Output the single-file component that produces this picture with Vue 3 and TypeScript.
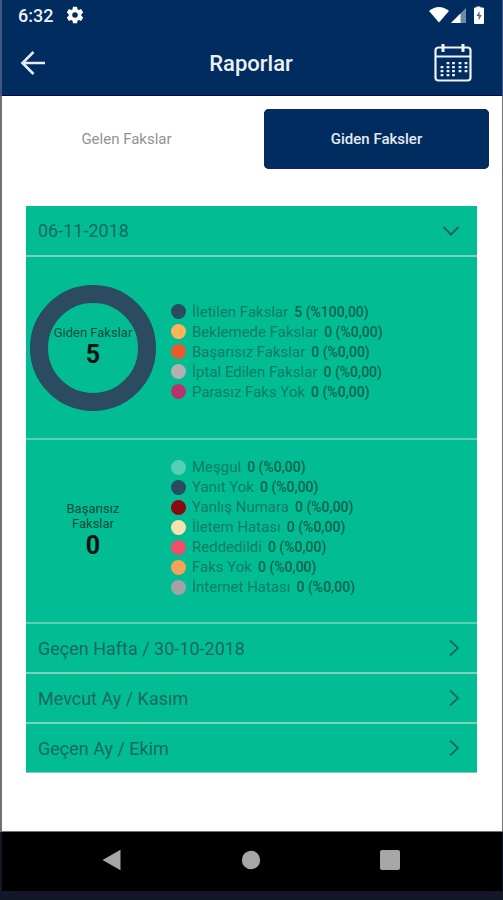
<script setup lang="ts">
import { ref } from 'vue'

interface LegendItem {
  label: string
  value: string
  color: string
}

const tabs = ['Gelen Fakslar', 'Giden Faksler']
const activeTab = ref(1)
const expanded = ref(true)

const outgoing: LegendItem[] = [
  { label: 'İletilen Fakslar', value: '5 (%100,00)', color: '#2a4b60' },
  { label: 'Beklemede Fakslar', value: '0 (%0,00)', color: '#fbb558' },
  { label: 'Başarısız Fakslar', value: '0 (%0,00)', color: '#eb5a2b' },
  { label: 'İptal Edilen Fakslar', value: '0 (%0,00)', color: '#b2b0b1' },
  { label: 'Parasız Faks Yok', value: '0 (%0,00)', color: '#b4356c' },
]

const failed: LegendItem[] = [
  { label: 'Meşgul', value: '0 (%0,00)', color: '#55cfb5' },
  { label: 'Yanıt Yok', value: '0 (%0,00)', color: '#2a4b60' },
  { label: 'Yanlış Numara', value: '0 (%0,00)', color: '#8b0711' },
  { label: 'İletem Hatası', value: '0 (%0,00)', color: '#f8e0b0' },
  { label: 'Reddedildi', value: '0 (%0,00)', color: '#f04f6c' },
  { label: 'Faks Yok', value: '0 (%0,00)', color: '#f6a259' },
  { label: 'İnternet Hatası', value: '0 (%0,00)', color: '#a4a2a4' },
]

const periods = ['Geçen Hafta / 30-10-2018', 'Mevcut Ay / Kasım', 'Geçen Ay / Ekim']
</script>

<template>
  <div class="device">
    <div class="screen">
      <header class="top">
        <div class="status">
          <span class="clock">6:32</span>
          <svg class="gear" width="18" height="18" viewBox="0 0 24 24">
            <path fill="#fff" fill-rule="evenodd" d="M9.3 1h5.4l.6 3.2 1.8 1 3.1-1.1 2.7 4.7-2.5 2.1v2.2l2.5 2.1-2.7 4.7-3.1-1.1-1.8 1-.6 3.2H9.3l-.6-3.2-1.8-1-3.1 1.1-2.7-4.7 2.5-2.1v-2.2L1.1 8.8l2.7-4.7 3.1 1.1 1.8-1zM12 8.3a3.7 3.7 0 1 0 0 7.4 3.7 3.7 0 0 0 0-7.4z" />
          </svg>
          <svg class="signals" width="56" height="20" viewBox="0 0 56 20">
            <path fill="#fff" d="M0 6Q10 -2 20 6L10 17.5z" />
            <path fill="#6f89a6" d="M37 3v15H22z" />
            <path fill="#fff" d="M31.5 8.5V18H22z" />
            <path fill="#fff" d="M47.5 2.500V1.500h4v1h2.500q1 0 1 1V18q0 1-1 1h-8q-1 0-1-1V3.500q0-1 1-1z" />
            <path fill="#48688c" d="M50.500 6l-3 5h2.200v4.500l3-5.500h-2.200z" />
          </svg>
        </div>
        <div class="appbar">
          <button class="icon-btn" type="button" aria-label="Geri">
            <svg width="26" height="26" viewBox="0 0 26 26" fill="none" stroke="#e6eaf2" stroke-width="2.6">
              <path d="M25 13H3M13.5 2L2.5 13l11 11" />
            </svg>
          </button>
          <h1>Raporlar</h1>
          <button class="icon-btn" type="button" aria-label="Takvim">
            <svg width="38" height="40" viewBox="0 0 38 40" fill="none" stroke="#eef1f6">
              <rect x="1.5" y="4.5" width="35" height="33" rx="3" stroke-width="2.2" />
              <path d="M1.5 13.5h35" stroke-width="2" />
              <path d="M9 1v8M29 1v8" stroke-width="3" />
              <path d="M8 23v11M14 19v15M19.5 19v15M26 19v12M32 19v12" stroke-width="2.8" stroke-dasharray="2.2 1.800" />
            </svg>
          </button>
        </div>
      </header>

      <main>
        <div class="tabs" role="tablist">
          <button
            v-for="(tab, i) in tabs"
            :key="tab"
            type="button"
            role="tab"
            :aria-selected="activeTab === i"
            :class="['tab', { active: activeTab === i }]"
            @click="activeTab = i"
          >{{ tab }}</button>
        </div>

        <div class="accordion">
          <button class="row first" type="button" :aria-expanded="expanded" @click="expanded = !expanded">
            <span>06-11-2018</span>
            <svg width="18" height="18" viewBox="0 0 18 18" fill="none" stroke="#17695f" stroke-width="2">
              <path d="M1.5 5L9 12.5 16.5 5" />
            </svg>
          </button>

          <template v-if="expanded">
            <section class="stats">
              <div class="chart">
                <svg viewBox="0 0 126 126">
                  <circle cx="63" cy="63" r="54" fill="none" stroke="#2a4b60" stroke-width="18" />
                </svg>
                <div class="total">
                  <span>Giden Fakslar</span>
                  <strong>5</strong>
                </div>
              </div>
              <ul class="legend">
                <li v-for="item in outgoing" :key="item.label">
                  <i class="dot" :style="{ background: item.color }"></i>
                  <span>{{ item.label }}</span>
                  <b>{{ item.value }}</b>
                </li>
              </ul>
            </section>
            <section class="stats failed">
              <div class="chart">
                <div class="total">
                  <span>Başarısız<br />Fakslar</span>
                  <strong>0</strong>
                </div>
              </div>
              <ul class="legend">
                <li v-for="item in failed" :key="item.label">
                  <i class="dot" :style="{ background: item.color }"></i>
                  <span>{{ item.label }}</span>
                  <b>{{ item.value }}</b>
                </li>
              </ul>
            </section>
          </template>

          <button v-for="period in periods" :key="period" class="row" type="button">
            <span>{{ period }}</span>
            <svg width="12" height="18" viewBox="0 0 12 18" fill="none" stroke="#17695f" stroke-width="1.8">
              <path d="M2 1.500L10 9 2 16.500" />
            </svg>
          </button>
        </div>
      </main>

      <nav class="navbar">
        <button type="button" aria-label="Geri">
          <svg width="20" height="22" viewBox="0 0 20 22"><path fill="#a6a6a6" d="M18.5 .8v20.400L.5 11z" /></svg>
        </button>
        <button type="button" aria-label="Ana ekran">
          <svg width="20" height="20" viewBox="0 0 20 20"><circle cx="10" cy="10" r="9.200" fill="#a6a6a6" /></svg>
        </button>
        <button type="button" aria-label="Son uygulamalar">
          <svg width="20" height="20" viewBox="0 0 20 20"><rect width="20" height="20" rx="2" fill="#a6a6a6" /></svg>
        </button>
      </nav>
    </div>
  </div>
</template>

<style>
body {
  background: #14162a;
}
</style>

<style scoped>
* {
  box-sizing: border-box;
}

.device {
  display: flex;
  min-height: 100vh;
  padding-bottom: 10px;
  font-family: Roboto, "Liberation Sans", sans-serif;
}

.screen {
  display: flex;
  flex: 1;
  flex-direction: column;
}

button {
  padding: 0;
  border: 0;
  background: none;
  font: inherit;
  color: inherit;
}

svg {
  display: block;
}

.top {
  border: solid #405783;
  border-width: 0 1px 0 2px;
  background: #002c5f;
  color: #eef1f6;
  box-shadow: inset 0 -1px #00094e;
}

.status {
  display: flex;
  align-items: center;
  height: 30px;
  padding: 0 17px 0 16px;
}

.clock {
  font-size: 18px;
  font-weight: 500;
}

.gear {
  margin-left: 13px;
}

.signals {
  margin-left: auto;
}

.appbar {
  display: grid;
  grid-template-columns: 60px 1fr 60px;
  align-items: center;
  height: 66px;
  padding-right: 20px;
  padding-left: 18px;
}

.icon-btn {
  justify-self: start;
}

.icon-btn:last-child {
  justify-self: end;
  margin-right: 10px;
}

h1 {
  margin: 0;
  font-size: 22px;
  font-weight: 500;
  text-align: center;
}

main {
  flex: 1;
  border: solid #717171;
  border-width: 0 1px 1px 2px;
  background: #fff;
}

.tabs {
  display: grid;
  grid-template-columns: 1fr 1fr;
  gap: 25px;
  padding: 13px 13px 37px 12px;
}

.tab {
  height: 60px;
  border-radius: 5px;
  font-size: 15px;
  color: #929292;
}

.tab.active {
  background: #002c5f;
  box-shadow: inset 0 0 0 1px #0b2768;
  font-weight: 500;
  color: #e4eaf3;
}

.accordion {
  margin: 0 25px 58px 24px;
  border-bottom: 1px solid #8fc5b5;
  background: #02bd94;
}

.row {
  display: flex;
  align-items: center;
  justify-content: space-between;
  width: 100%;
  height: 50px;
  padding: 0 17px 0 12px;
  border-bottom: 2px solid #7dd1bb;
  font-size: 18px;
  color: #17695f;
  text-align: left;
}

.row.first {
  height: 51px;
}

.row:last-child {
  height: 48px;
  border-bottom: 0;
}

.stats {
  display: flex;
  align-items: center;
  gap: 15px;
  height: 183px;
  padding: 0 4px;
  border-bottom: 2px solid #5dcfb1;
}

.stats.failed {
  height: 184px;
  padding-bottom: 8px;
}

.chart {
  display: grid;
  place-items: center;
  width: 126px;
}

.failed .chart {
  padding-top: 8px;
}

.chart > * {
  grid-area: 1 / 1;
}

.chart svg {
  width: 100%;
}

.total {
  display: flex;
  flex-direction: column;
  align-items: center;
  font-size: 13px;
  line-height: 15px;
  color: #064b3c;
  text-align: center;
}

.total strong {
  font-size: 25px;
  line-height: 30px;
  color: #00120d;
}

.legend {
  margin: 0;
  padding: 0;
  list-style: none;
}

.stats:not(.failed) .legend {
  padding-top: 8px;
}

.legend li {
  display: flex;
  align-items: center;
  gap: 6px;
  height: 20px;
  font-size: 15px;
  color: #087c65;
  white-space: nowrap;
}

.legend b {
  font-size: 14px;
  font-weight: 500;
  color: #07644f;
}

.dot {
  width: 15px;
  height: 15px;
  border-radius: 50%;
}

.navbar {
  display: grid;
  grid-template-columns: repeat(3, 1fr);
  place-items: center;
  height: 59px;
  margin: 0 1px 0 2px;
  padding: 0 42px 3px 40px;
  background: #000;
}
</style>
